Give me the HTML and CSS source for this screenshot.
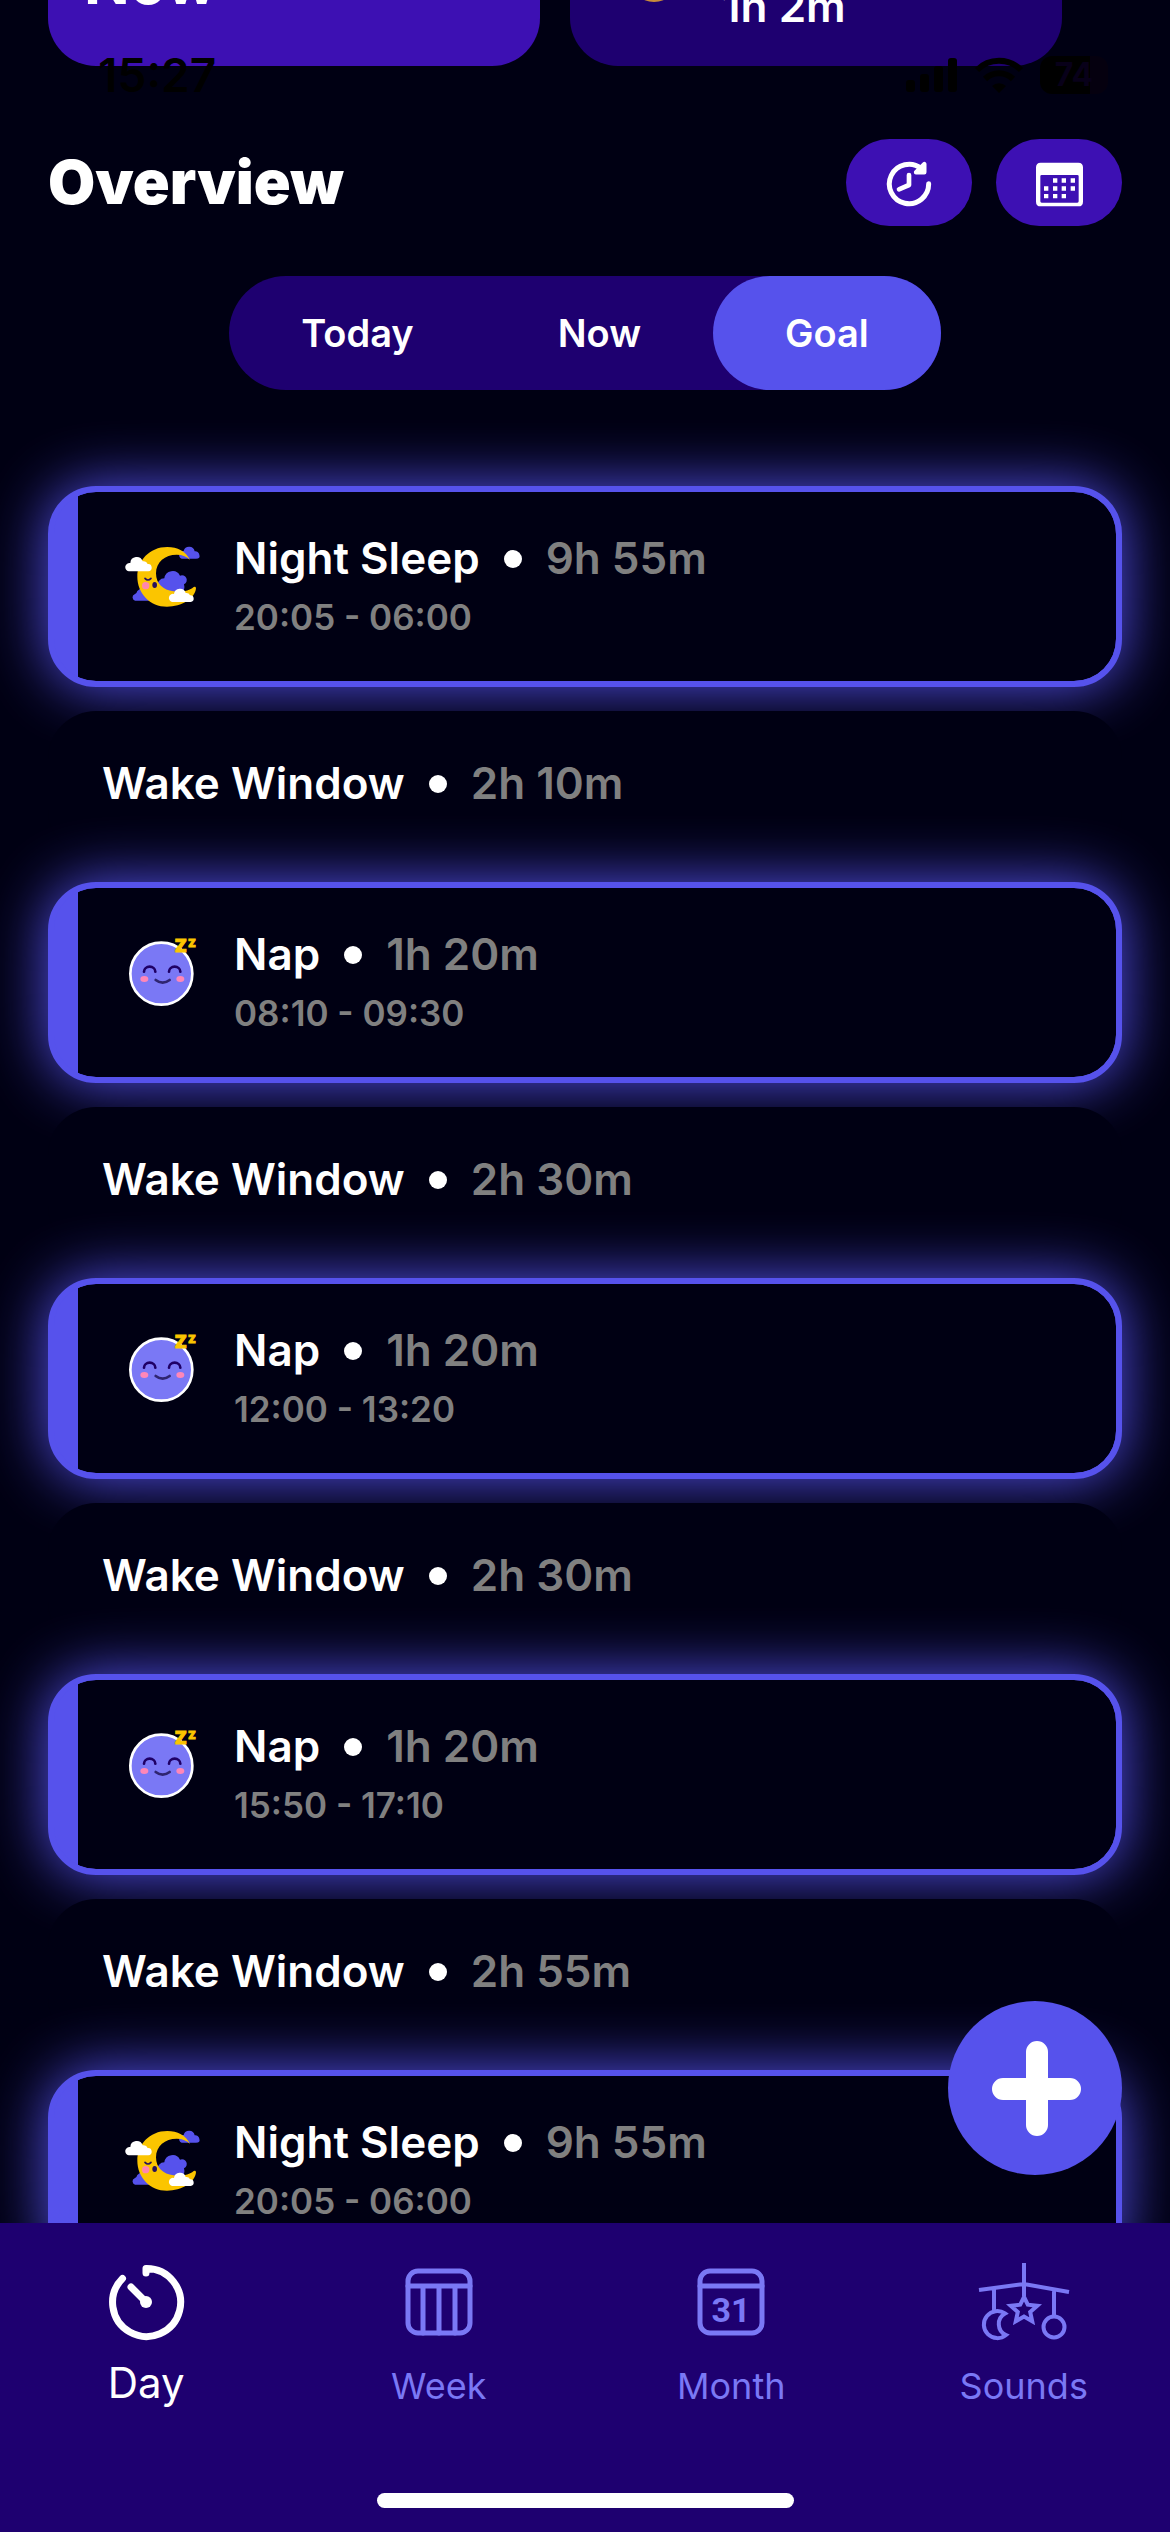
FILE: index.html
```html
<!DOCTYPE html>
<html lang="en">
<head>
<meta charset="utf-8">
<meta name="viewport" content="width=device-width, initial-scale=1">
<title>Overview</title>
<link rel="stylesheet" href="styles.css">
</head>
<body>
<svg class="sprite" aria-hidden="true">
  <symbol id="moon" viewBox="0 0 330 270">
    <g fill="#5652ec">
      <path d="M215 86a12 12 0 0 1 6-23a17 17 0 0 1 33 1a12 12 0 0 1 14 10q4 12-10 12z"/>
      <path d="M164 190a16 16 0 0 1-1-45a25 25 0 0 1 47-8a14 14 0 0 1 12 26q4 14-6 27z"/>
      <path d="M75 212a10 10 0 0 1-1-19q6-2 8-10l18-14 20 43z"/>
    </g>
    <path fill="#fbc500" d="M240 90C228 64 202 51 172 51C118 51 82 92 82 140C82 190 120 230 171 230C215 230 256 205 258 174C257 170 253 169 250 172C240 182 215 187 190 184C160 180 138 162 138 130C138 96 165 74 200 74C218 74 231 80 240 90Z"/>
    <path d="M105 145q9 10 18 0" fill="none" stroke="#26105c" stroke-width="5" stroke-linecap="round"/>
    <ellipse cx="134" cy="165" rx="7" ry="9" fill="#26105c"/>
    <circle cx="107" cy="167" r="11" fill="#ff87ad"/>
    <g fill="#fff">
      <path d="M56 124a12 12 0 0 1 5-25a19 19 0 0 1 37-5a13 13 0 0 1 15 8a11 11 0 0 1 2 22z"/>
      <path d="M186 216a12 12 0 0 1 6-24a18 18 0 0 1 35-3a12 12 0 0 1 13 7a10 10 0 0 1 2 20z"/>
    </g>
  </symbol>
  <symbol id="nap" viewBox="0 18 330 270">
    <circle cx="154" cy="161" r="93" fill="#7a78f5" stroke="#fff" stroke-width="8"/>
    <g fill="none" stroke="#1f0066" stroke-width="8" stroke-linecap="round">
      <path d="M102 155a17 15 0 0 1 34 0M177 155a17 15 0 0 1 34 0"/>
      <path d="M137 180q21 16 42 0" stroke="#2f2570"/>
    </g>
    <ellipse cx="103" cy="177" rx="12" ry="9" fill="#ff87b8"/>
    <ellipse cx="211" cy="177" rx="12" ry="9" fill="#ff87b8"/>
    <text class="zed" x="194" y="95" font-size="52">Z</text>
    <text class="zed" x="235" y="80" font-size="32">Z</text>
  </symbol>
</svg>

<div class="app">
  <div class="status">
    <span class="clock">15:27</span>
    <div class="indicators">
      <svg width="52" height="38" viewBox="0 0 52 38" aria-hidden="true"><rect x="0" y="24" width="9" height="12" rx="3"/><rect x="14" y="18" width="9" height="18" rx="3"/><rect x="28" y="10" width="9" height="26" rx="3"/><rect x="42" y="2" width="9" height="34" rx="3"/></svg>
      <svg width="50" height="38" viewBox="0 0 50 38" aria-hidden="true"><g fill="none" stroke="#000" stroke-width="6"><path d="M3 14a31 31 0 0 1 44 0"/><path d="M11 23a20 20 0 0 1 28 0"/></g><path d="M18 30a10 10 0 0 1 14 0l-7 7z"/></svg>
      <span class="battery">74</span>
    </div>
  </div>

  <main class="content">
    <section class="hero">
      <div class="tile tile-now">Now</div>
      <div class="tile tile-next">
        <svg width="48" height="48" viewBox="0 0 48 48" aria-hidden="true"><circle cx="24" cy="24" r="24" fill="#c98b3a"/></svg>
        <span>1h 2m</span>
      </div>
    </section>

    <header class="head">
      <h1>Overview</h1>
      <div class="actions">
        <button class="pill" type="button" aria-label="History">
          <svg width="48" height="48" viewBox="165 86 144 144"><g fill="none" stroke="#fff" stroke-linecap="round" stroke-linejoin="round"><path stroke-width="15" d="M296 160A59 59 0 1 1 274 115"/><path stroke-width="13" fill="#fff" d="M283 101V126H258Z"/><path stroke-width="14" d="M237 134V164L207 177"/></g></svg>
        </button>
        <button class="pill" type="button" aria-label="Calendar">
          <svg width="48" height="48" viewBox="615 86 144 144"><path fill="#fff" fill-rule="evenodd" d="M632 97H745Q759 97 759 111V214Q759 228 745 228H632Q618 228 618 214V111Q618 97 632 97ZM635 134Q631 134 631 138V213Q631 217 635 217H742Q746 217 746 213V138Q746 134 742 134Z"/><path fill="#fff" d="M669 144h13v13h-13zM695 144h13v13h-13zM722 144h13v13h-13zM642 168h13v13h-13zM669 168h13v13h-13zM695 168h13v13h-13zM722 168h13v13h-13zM642 191h13v13h-13zM669 191h13v13h-13zM695 191h13v13h-13z"/></svg>
        </button>
      </div>
    </header>

    <div class="segments" role="group" aria-label="Plan">
      <button type="button" aria-pressed="false">Today</button>
      <button type="button" aria-pressed="false">Now</button>
      <button type="button" aria-pressed="true">Goal</button>
    </div>

    <section class="list">
      <article class="sleep">
        <svg class="face" aria-hidden="true"><use href="#moon"/></svg>
        <div><h2 class="line">Night Sleep<i class="dot"></i><span class="muted">9h 55m</span></h2><p class="time">20:05 - 06:00</p></div>
      </article>
      <article class="wake"><h2 class="line">Wake Window<i class="dot"></i><span class="muted">2h 10m</span></h2></article>
      <article class="sleep">
        <svg class="face" aria-hidden="true"><use href="#nap"/></svg>
        <div><h2 class="line">Nap<i class="dot"></i><span class="muted">1h 20m</span></h2><p class="time">08:10 - 09:30</p></div>
      </article>
      <article class="wake"><h2 class="line">Wake Window<i class="dot"></i><span class="muted">2h 30m</span></h2></article>
      <article class="sleep">
        <svg class="face" aria-hidden="true"><use href="#nap"/></svg>
        <div><h2 class="line">Nap<i class="dot"></i><span class="muted">1h 20m</span></h2><p class="time">12:00 - 13:20</p></div>
      </article>
      <article class="wake"><h2 class="line">Wake Window<i class="dot"></i><span class="muted">2h 30m</span></h2></article>
      <article class="sleep">
        <svg class="face" aria-hidden="true"><use href="#nap"/></svg>
        <div><h2 class="line">Nap<i class="dot"></i><span class="muted">1h 20m</span></h2><p class="time">15:50 - 17:10</p></div>
      </article>
      <article class="wake"><h2 class="line">Wake Window<i class="dot"></i><span class="muted">2h 55m</span></h2></article>
      <article class="sleep">
        <svg class="face" aria-hidden="true"><use href="#moon"/></svg>
        <div><h2 class="line">Night Sleep<i class="dot"></i><span class="muted">9h 55m</span></h2><p class="time">20:05 - 06:00</p></div>
      </article>
    </section>
  </main>

  <footer class="bottom">
    <button class="add" type="button" aria-label="Add">
      <svg width="96" height="98" viewBox="0 0 96 98"><path d="M50 13V86M16 50H83" stroke="#fff" stroke-width="22" stroke-linecap="round"/></svg>
    </button>
    <nav class="tabs">
      <a class="active" href="#day" aria-current="page">
        <svg viewBox="0 0 96 96"><path d="M48 19V14.500A34 34 0 1 1 24.500 24.500M33 33L48 48" stroke-width="7"/><circle cx="48" cy="48" r="6" fill="currentColor" stroke="none"/></svg>
        <span>Day</span>
      </a>
      <a href="#week">
        <svg viewBox="0 0 96 96" stroke-width="5"><rect x="17" y="17" width="62" height="62" rx="10"/><path d="M17 32H79M32 32V79M48 32V79M64 32V79"/></svg>
        <span>Week</span>
      </a>
      <a href="#month">
        <svg viewBox="0 0 96 96" stroke-width="5"><rect x="17" y="17" width="62" height="62" rx="10"/><path d="M17 32H79"/><text class="date" x="48" y="68">31</text></svg>
        <span>Month</span>
      </a>
      <a href="#sounds">
        <svg class="thin" viewBox="0 0 96 96" stroke-width="4"><path d="M48 9V42M3 36L48 30L93 38M18 34V58M78 35V62"/><path d="M29 59.500A13.500 13.500 0 1 0 30 81A12 12 0 0 1 29 59.500Z"/><path d="M48 43L51.800 50.700L61.300 51.700L54.200 58L56.200 67.300L48 62.500L39.800 67.300L41.800 58L34.700 51.700L44.200 50.700Z"/><circle cx="78" cy="73" r="10.500"/></svg>
        <span>Sounds</span>
      </a>
    </nav>
    <div class="home"></div>
  </footer>
</div>
</body>
</html>
```

FILE: styles.css
```css
:root {
  --bg: #000013;
  --deep: #1e0070;
  --royal: #3d10b3;
  --accent: #5652ec;
  --soft: #7a78f5;
  --muted: #808080;
}

* { box-sizing: border-box; }

body {
  margin: 0;
  background: var(--bg);
  color: #fff;
  font-family: Inter, "Noto Sans", sans-serif;
}

h1, h2, p { margin: 0; }

button {
  margin: 0;
  padding: 0;
  border: 0;
  color: inherit;
  font: inherit;
  cursor: pointer;
}

.sprite {
  position: absolute;
  width: 0;
  height: 0;
}

.app {
  position: relative;
  display: flex;
  flex-direction: column;
  height: 100vh;
}

/* Status bar, drawn over the scrolled content */
.status {
  position: absolute;
  z-index: 2;
  top: 0;
  left: 0;
  right: 0;
  display: flex;
  align-items: center;
  justify-content: space-between;
  padding: 48px 62px 0 98px;
  color: #000;
}

.clock {
  font-size: 46px;
  font-weight: 600;
  line-height: 54px;
}

.indicators {
  display: flex;
  align-items: center;
  gap: 16px;
}

.battery {
  width: 68px;
  border-radius: 12px;
  background: linear-gradient(90deg, #000 50px, #05000f 0);
  color: #080019;
  font-size: 32px;
  font-weight: 700;
  line-height: 38px;
  text-align: center;
}

.content {
  flex: 1;
  min-height: 0;
  padding: 0 48px;
  overflow-y: auto;
  scrollbar-width: none;
}

/* Only the lower edge of the tiles stays in view */
.hero {
  display: grid;
  grid-template-columns: repeat(2, 492px);
  align-content: end;
  gap: 30px;
  height: 66px;
  overflow: hidden;
}

.tile {
  display: flex;
  align-items: flex-end;
  border-radius: 48px;
  line-height: 60px;
}

.tile-now {
  padding: 72px 36px 54px;
  background: var(--royal);
  font-size: 60px;
  font-weight: 700;
}

.tile-next {
  gap: 44px;
  padding: 72px 60px 30px;
  background: var(--deep);
  font-size: 44px;
  font-weight: 600;
}

.tile-next svg { margin-bottom: 34px; }

.head {
  display: flex;
  align-items: center;
  justify-content: space-between;
  padding-top: 73px;
}

h1 {
  font-size: 61px;
  font-weight: 900;
  line-height: 87px;
}

.actions {
  display: flex;
  gap: 24px;
}

.pill {
  display: grid;
  place-items: center;
  width: 126px;
  height: 87px;
  border-radius: 44px;
  background: var(--royal);
}

.segments {
  display: flex;
  width: max-content;
  margin: 50px auto 0;
  border-radius: 57px;
  background: var(--deep);
  font-size: 38px;
  font-weight: 600;
  line-height: 114px;
}

.segments button {
  padding: 0 72px;
  border-radius: 57px;
  background: none;
}

.segments button[aria-pressed="true"] { background: var(--accent); }

.list {
  display: grid;
  gap: 24px;
  padding: 96px 0 48px;
}

.sleep,
.wake {
  border-radius: 48px;
  background: var(--bg);
}

.sleep {
  display: flex;
  align-items: flex-start;
  gap: 14px;
  padding: 35px 48px 37px 56px;
  border: 6px solid var(--accent);
  background: linear-gradient(90deg, var(--accent) 24px, var(--bg) 0) padding-box, var(--accent);
  box-shadow: 0 0 60px var(--accent);
}

.wake { padding: 41px 54px 43px; }

.face {
  flex: none;
  width: 110px;
  height: 90px;
  margin-top: 3px;
}

.zed {
  fill: #fbc500;
  stroke: #fbc500;
  stroke-width: 3px;
  font-weight: 900;
}

.line {
  display: flex;
  align-items: center;
  gap: 24px;
  font-size: 44px;
  font-weight: 600;
  line-height: 63px;
}

.dot {
  width: 18px;
  height: 18px;
  border-radius: 50%;
  background: #fff;
}

.muted,
.time { color: var(--muted); }

.time {
  font-size: 35px;
  font-weight: 600;
  line-height: 54px;
}

.bottom {
  position: relative;
  padding: 31px 0 24px;
  background: var(--deep);
}

/* Floating button above the tab bar */
.add {
  position: absolute;
  right: 48px;
  bottom: calc(100% + 48px);
  display: grid;
  place-items: center;
  width: 174px;
  height: 174px;
  border-radius: 50%;
  background: var(--accent);
}

.tabs {
  display: grid;
  grid-template-columns: repeat(4, 1fr);
}

.tabs a {
  display: flex;
  flex-direction: column;
  align-items: center;
  color: var(--soft);
  font-size: 36px;
  line-height: 72px;
  text-decoration: none;
}

.tabs .active {
  color: #fff;
  font-size: 42px;
  line-height: 66px;
}

.tabs svg {
  width: 96px;
  height: 96px;
  fill: none;
  stroke: currentColor;
  stroke-linecap: round;
  stroke-linejoin: round;
}

.tabs .thin {
  stroke-linecap: butt;
  stroke-linejoin: miter;
}

.tabs .date {
  fill: currentColor;
  stroke: none;
  font-family: Roboto, sans-serif;
  font-size: 34px;
  font-weight: 700;
  text-anchor: middle;
}

.home {
  width: 417px;
  height: 15px;
  margin: 71px auto 0;
  border-radius: 8px;
  background: #fff;
}
```
